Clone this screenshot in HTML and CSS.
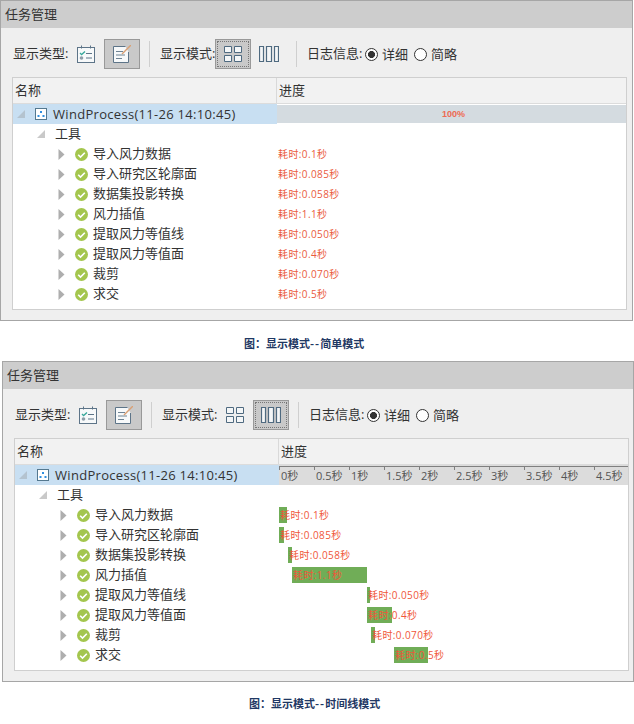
FILE: index.html
```html
<!DOCTYPE html>
<html lang="zh">
<head>
<meta charset="utf-8">
<title>任务管理</title>
<link rel="stylesheet" href="styles.css">
</head>
<body>
<svg class="defs" aria-hidden="true">
  <symbol id="i-cal" viewBox="0 0 18 18">
    <rect x="0.5" y="2.5" width="17" height="15" fill="#f7f9fa" stroke="#5d7488"/>
    <path d="M4.5 0.5v3M13.5 0.5v3" stroke="#5d7488" fill="none"/>
    <path d="M3 8l1.6 1.6L8 6.5" stroke="#35a79a" stroke-width="1.3" fill="none"/>
    <circle cx="4.5" cy="13" r="1.8" fill="#8e9ea9"/>
    <path d="M9 8.500h6M9 13h6" stroke="#5d7488" fill="none"/>
  </symbol>
  <symbol id="i-edit" viewBox="0 0 18 18">
    <path d="M15.500 7v10.500H0.500V1.500h12" fill="#f7f9fa" stroke="#5d7488"/>
    <path d="M3 6.500h7M3 10h9M3 13.500h6" stroke="#6f8494" fill="none"/>
    <path d="M9 9L18 0" stroke="#d9a074" stroke-width="1.4" fill="none"/>
  </symbol>
  <symbol id="i-grid" viewBox="0 0 18 16">
    <path d="M0.5 0.5h7v6h-7zM10.5 0.5h7v6h-7zM0.5 9.5h7v6h-7zM10.5 9.5h7v6h-7z" fill="#f4f6f7" stroke="#4f6a80"/>
  </symbol>
  <symbol id="i-cols" viewBox="0 0 20 16">
    <path d="M0.5 0.5h4v15h-4zM7.5 0.5h5v15h-5zM15.500 0.5h4v15h-4z" fill="#f4f6f7" stroke="#4f6a80" stroke-width="1.2"/>
  </symbol>
  <symbol id="i-proc" viewBox="0 0 12 12">
    <rect x="0.5" y="0.5" width="11" height="11" fill="#fff" stroke="#54788f"/>
    <path d="M5 3h2v2H5zM2.500 7h2v2h-2zM7.500 7h2v2h-2z" fill="#2f8fe0"/>
  </symbol>
  <symbol id="i-check" viewBox="0 0 13 13">
    <circle cx="6.500" cy="6.500" r="6.500" fill="#a4c64e"/>
    <path d="M3.200 6.700l2.300 2.300 4.300-4.300" stroke="#fff" stroke-width="1.600" fill="none"/>
  </symbol>
  <symbol id="i-down" viewBox="0 0 8 8"><path d="M8 0v8H0z" fill="currentColor"/></symbol>
  <symbol id="i-right" viewBox="0 0 7 11"><path d="M0.500 0l6 5.500-6 5.500z" fill="#aeaeae"/></symbol>
</svg>

<section class="panel">
  <h2 class="title">任务管理</h2>
  <div class="toolbar">
    <span class="label">显示类型:</span>
    <span class="tool"><svg class="ic18"><use href="#i-cal"/></svg></span>
    <span class="tool on"><svg class="ic18"><use href="#i-edit"/></svg></span>
    <i class="sep"></i>
    <span class="label">显示模式:</span>
    <span class="tool on focus"><svg class="ic-grid"><use href="#i-grid"/></svg></span>
    <span class="tool"><svg class="ic-cols"><use href="#i-cols"/></svg></span>
    <i class="sep"></i>
    <span class="label">日志信息:</span>
    <span class="radio checked"></span><span class="opt">详细</span>
    <span class="radio second"></span><span class="opt">简略</span>
  </div>
  <div class="tree">
    <div class="head"><span>名称</span><span>进度</span></div>
    <div class="row root">
      <div class="name sel"><svg class="tri-d"><use href="#i-down"/></svg><svg class="proc"><use href="#i-proc"/></svg><span>WindProcess(11-26 14:10:45)</span></div>
      <div class="total">100%</div>
    </div>
    <div class="row"><div class="name d1"><svg class="tri-d"><use href="#i-down"/></svg><span>工具</span></div></div>
    <div class="row"><div class="name d2"><svg class="tri-r"><use href="#i-right"/></svg><svg class="chk"><use href="#i-check"/></svg><span>导入风力数据</span></div><div class="cost">耗时:0.1秒</div></div>
    <div class="row"><div class="name d2"><svg class="tri-r"><use href="#i-right"/></svg><svg class="chk"><use href="#i-check"/></svg><span>导入研究区轮廓面</span></div><div class="cost">耗时:0.085秒</div></div>
    <div class="row"><div class="name d2"><svg class="tri-r"><use href="#i-right"/></svg><svg class="chk"><use href="#i-check"/></svg><span>数据集投影转换</span></div><div class="cost">耗时:0.058秒</div></div>
    <div class="row"><div class="name d2"><svg class="tri-r"><use href="#i-right"/></svg><svg class="chk"><use href="#i-check"/></svg><span>风力插值</span></div><div class="cost">耗时:1.1秒</div></div>
    <div class="row"><div class="name d2"><svg class="tri-r"><use href="#i-right"/></svg><svg class="chk"><use href="#i-check"/></svg><span>提取风力等值线</span></div><div class="cost">耗时:0.050秒</div></div>
    <div class="row"><div class="name d2"><svg class="tri-r"><use href="#i-right"/></svg><svg class="chk"><use href="#i-check"/></svg><span>提取风力等值面</span></div><div class="cost">耗时:0.4秒</div></div>
    <div class="row"><div class="name d2"><svg class="tri-r"><use href="#i-right"/></svg><svg class="chk"><use href="#i-check"/></svg><span>裁剪</span></div><div class="cost">耗时:0.070秒</div></div>
    <div class="row"><div class="name d2"><svg class="tri-r"><use href="#i-right"/></svg><svg class="chk"><use href="#i-check"/></svg><span>求交</span></div><div class="cost">耗时:0.5秒</div></div>
  </div>
</section>
<p class="caption cap1">图：显示模式<span class="dash">--</span>简单模式</p>

<section class="panel panel2">
  <h2 class="title">任务管理</h2>
  <div class="toolbar">
    <span class="label">显示类型:</span>
    <span class="tool"><svg class="ic18"><use href="#i-cal"/></svg></span>
    <span class="tool on"><svg class="ic18"><use href="#i-edit"/></svg></span>
    <i class="sep"></i>
    <span class="label">显示模式:</span>
    <span class="tool"><svg class="ic-grid"><use href="#i-grid"/></svg></span>
    <span class="tool on focus"><svg class="ic-cols"><use href="#i-cols"/></svg></span>
    <i class="sep"></i>
    <span class="label">日志信息:</span>
    <span class="radio checked"></span><span class="opt">详细</span>
    <span class="radio second"></span><span class="opt">简略</span>
  </div>
  <div class="tree">
    <div class="head"><span>名称</span><span>进度</span></div>
    <div class="row root">
      <div class="name sel"><svg class="tri-d"><use href="#i-down"/></svg><svg class="proc"><use href="#i-proc"/></svg><span>WindProcess(11-26 14:10:45)</span></div>
      <div class="ruler"><span>0秒</span><span>0.5秒</span><span>1秒</span><span>1.5秒</span><span>2秒</span><span>2.5秒</span><span>3秒</span><span>3.5秒</span><span>4秒</span><span>4.5秒</span></div>
    </div>
    <div class="row"><div class="name d1"><svg class="tri-d"><use href="#i-down"/></svg><span>工具</span></div></div>
    <div class="row"><div class="name d2"><svg class="tri-r"><use href="#i-right"/></svg><svg class="chk"><use href="#i-check"/></svg><span>导入风力数据</span></div><div class="track"><div class="bar" style="margin-left:0;width:8px">耗时:0.1秒</div></div></div>
    <div class="row"><div class="name d2"><svg class="tri-r"><use href="#i-right"/></svg><svg class="chk"><use href="#i-check"/></svg><span>导入研究区轮廓面</span></div><div class="track"><div class="bar" style="margin-left:0;width:5px">耗时:0.085秒</div></div></div>
    <div class="row"><div class="name d2"><svg class="tri-r"><use href="#i-right"/></svg><svg class="chk"><use href="#i-check"/></svg><span>数据集投影转换</span></div><div class="track"><div class="bar" style="margin-left:9px;width:4px">耗时:0.058秒</div></div></div>
    <div class="row"><div class="name d2"><svg class="tri-r"><use href="#i-right"/></svg><svg class="chk"><use href="#i-check"/></svg><span>风力插值</span></div><div class="track"><div class="bar" style="margin-left:13px;width:75px">耗时:1.1秒</div></div></div>
    <div class="row"><div class="name d2"><svg class="tri-r"><use href="#i-right"/></svg><svg class="chk"><use href="#i-check"/></svg><span>提取风力等值线</span></div><div class="track"><div class="bar" style="margin-left:88px;width:3px">耗时:0.050秒</div></div></div>
    <div class="row"><div class="name d2"><svg class="tri-r"><use href="#i-right"/></svg><svg class="chk"><use href="#i-check"/></svg><span>提取风力等值面</span></div><div class="track"><div class="bar" style="margin-left:88px;width:25px">耗时:0.4秒</div></div></div>
    <div class="row"><div class="name d2"><svg class="tri-r"><use href="#i-right"/></svg><svg class="chk"><use href="#i-check"/></svg><span>裁剪</span></div><div class="track"><div class="bar" style="margin-left:92px;width:4px">耗时:0.070秒</div></div></div>
    <div class="row"><div class="name d2"><svg class="tri-r"><use href="#i-right"/></svg><svg class="chk"><use href="#i-check"/></svg><span>求交</span></div><div class="track"><div class="bar" style="margin-left:115px;width:34px">耗时:0.5秒</div></div></div>
  </div>
</section>
<p class="caption cap2">图：显示模式<span class="dash">--</span>时间线模式</p>
</body>
</html>
```
FILE: styles.css
```css
* { box-sizing: border-box; }
html, body { margin: 0; padding: 0; overflow: hidden; background: #fff; }
body {
  width: 634px;
  height: 724px;
  font-family: "Open Sans", "Noto Sans CJK SC", sans-serif;
  font-size: 13px;
  color: #333;
}
.defs { display: none; }
svg { display: block; flex: none; }

.panel {
  width: 633px;
  height: 321px;
  border: 1px solid #a6a6a6;
  background: #efefef;
}
.panel2 { width: 632px; margin-left: 2px; }

.title {
  margin: 0;
  height: 27px;
  padding-left: 4px;
  background: #cdcdcd;
  font-size: 13px;
  font-weight: 400;
  line-height: 26px;
}

.toolbar {
  display: flex;
  align-items: center;
  height: 49px;
  padding: 11px 0 8px 12px;
}
.label { line-height: 28px; margin-bottom: 2px; white-space: nowrap; width: 55px; }
.tool {
  display: flex;
  align-items: center;
  justify-content: center;
  width: 36px;
  height: 30px;
  border: 1px solid transparent;
}
.tool.on { background: #c9c9c9; border: 1px solid #999; }
.tool.focus { outline: 1px dotted #777; outline-offset: -3px; }
.ic18 { width: 18px; height: 18px; }
.ic-grid { width: 18px; height: 16px; }
.ic-cols { width: 20px; height: 16px; }
.sep { width: 1px; height: 26px; background: #cfcfcf; margin: 0 10px 0 9px; }

.radio {
  width: 13px;
  height: 13px;
  margin-left: 3px;
  border: 1px solid #333;
  border-radius: 50%;
  background: #fff;
  flex: none;
}
.radio.second { margin-left: 6px; }
.radio.checked { background: radial-gradient(circle, #333 0 3.2px, #fff 3.8px); }
.opt { margin: 0 0 2px 4px; white-space: nowrap; }

.tree {
  width: 615px;
  height: 233px;
  margin-left: 11px;
  border: 1px solid #cfcfcf;
  background: #fff;
}
.head {
  display: grid;
  grid-template-columns: 264px 1fr;
  height: 26px;
  background: #f2f2f2;
  border-bottom: 1px solid #dcdcdc;
  line-height: 25px;
}
.head span { padding-left: 2px; }
.head span + span { border-left: 1px solid #d9d9d9; padding-left: 2px; margin-left: -1px; }

.row {
  display: grid;
  grid-template-columns: 264px 1fr;
  height: 20px;
  line-height: 20px;
  white-space: nowrap;
}
.name { display: flex; align-items: center; height: 20px; min-width: 0; }
.sel { background: #c8dff2; padding-left: 4px; color: #b4c3cf; }
.sel span { color: #333; letter-spacing: 0.3px; }
.d1 { padding-left: 24px; color: #c9c9c9; }
.d1 span { color: #333; }
.d2 { padding-left: 45px; }
.tri-d { width: 8px; height: 8px; }
.tri-r { width: 7px; height: 11px; }
.proc { width: 12px; height: 12px; margin-left: 10px; }
.chk { width: 13px; height: 13px; margin-left: 10px; }
.sel .proc + span { margin-left: 6px; }
.d1 .tri-d + span { margin: 0 0 2px 10px; }
.d2 .chk + span { margin: 0 0 2px 5px; }

.total {
  margin-top: 1px;
  height: 18px;
  padding-left: 4px;
  background: #d4dbe0;
  color: #ee6a52;
  font: 700 9px/18px "Liberation Sans", sans-serif;
  text-align: center;
}
.cost {
  padding-left: 1px;
  color: #ea5a40;
  font-size: 10px;
  letter-spacing: 0.4px;
  line-height: 21px;
}

.ruler {
  display: flex;
  height: 20px;
  background: #dcdcdc;
  overflow: hidden;
}
.ruler span {
  flex: 0 0 35px;
  padding: 0 0 0 2px;
  color: #555;
  font-size: 11px;
  line-height: 21px;
  background:
    linear-gradient(#808080, #808080) left 1px / 100% 1px no-repeat,
    linear-gradient(#808080, #808080) left 1px / 1px 4px no-repeat;
}
.track { height: 20px; padding-top: 2px; }
.bar {
  height: 16px;
  background: #70ad57;
  color: #f0563a;
  font-size: 10px;
  letter-spacing: 0.4px;
  line-height: 17px;
  padding-left: 1px;
}

.caption {
  margin: 0;
  height: 40px;
  font-family: "Noto Sans CJK SC", sans-serif;
  font-size: 11px;
  font-weight: 700;
  color: #1f3864;
  line-height: 45px;
  white-space: nowrap;
}
.dash { letter-spacing: 1px; }
.cap1 { padding-left: 244px; }
.cap2 { padding-left: 249px; line-height: 43px; }
```
